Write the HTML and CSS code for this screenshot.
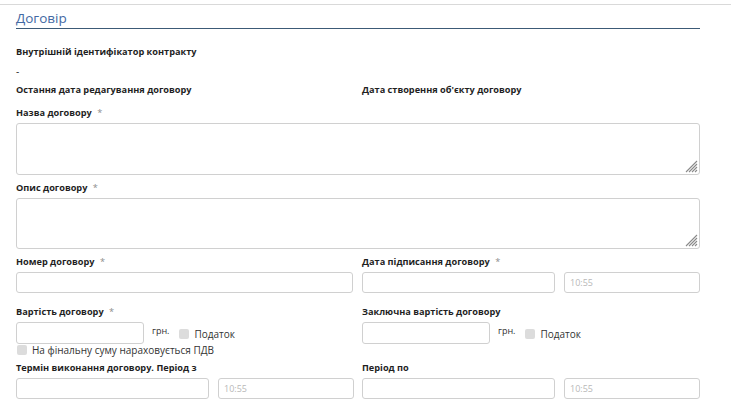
FILE: index.html
```html
<!DOCTYPE html>
<html lang="uk">
<head>
<meta charset="utf-8">
<title>Договір</title>
<link rel="stylesheet" href="styles.css">
</head>
<body>
<div class="topline"></div>
<main class="page">
  <h2 class="title">Договір</h2>

  <div class="info">
    <div class="label">Внутрішній ідентифікатор контракту</div>
    <div class="value">-</div>
    <div class="cols">
      <div class="label">Остання дата редагування договору</div>
      <div class="label">Дата створення об'єкту договору</div>
    </div>
  </div>

  <div class="block">
    <div class="label">Назва договору <span class="req">*</span></div>
    <div class="ta-wrap">
      <textarea class="ta"></textarea>
      <svg class="grip" width="14" height="14" viewBox="0 0 14 14"><path d="M13 2L2 13M13 5L5 13M13 8L8 13M13 11L11 13" stroke="#8a8a8a" stroke-width="1.1" fill="none"/></svg>
    </div>
  </div>

  <div class="block">
    <div class="label">Опис договору <span class="req">*</span></div>
    <div class="ta-wrap ta-wrap2">
      <textarea class="ta ta2"></textarea>
      <svg class="grip" width="14" height="14" viewBox="0 0 14 14"><path d="M13 2L2 13M13 5L5 13M13 8L8 13M13 11L11 13" stroke="#8a8a8a" stroke-width="1.1" fill="none"/></svg>
    </div>
  </div>

  <div class="cols block2">
    <div>
      <div class="label">Номер договору <span class="req">*</span></div>
      <input class="inp full" type="text">
    </div>
    <div>
      <div class="label">Дата підписання договору <span class="req">*</span></div>
      <div class="dt">
        <input class="inp" type="text">
        <input class="inp time" type="text" placeholder="10:55">
      </div>
    </div>
  </div>

  <div class="cols block3">
    <div>
      <div class="label">Вартість договору <span class="req">*</span></div>
      <div class="money">
        <input class="inp sum" type="text">
        <span class="cur">грн.</span>
        <span class="chk"></span>
        <span class="chk-label">Податок</span>
      </div>
    </div>
    <div>
      <div class="label">Заключна вартість договору</div>
      <div class="money">
        <input class="inp sum" type="text">
        <span class="cur">грн.</span>
        <span class="chk"></span>
        <span class="chk-label">Податок</span>
      </div>
    </div>
  </div>
  <div class="vat">
    <span class="chk"></span>
    <span class="chk-label">На фінальну суму нараховується ПДВ</span>
  </div>

  <div class="cols block4">
    <div>
      <div class="label">Термін виконання договору. Період з</div>
      <div class="dt">
        <input class="inp" type="text">
        <input class="inp time" type="text" placeholder="10:55">
      </div>
    </div>
    <div>
      <div class="label">Період по</div>
      <div class="dt">
        <input class="inp" type="text">
        <input class="inp time" type="text" placeholder="10:55">
      </div>
    </div>
  </div>
</main>
</body>
</html>
```
FILE: styles.css
```css
* { box-sizing: border-box; }
html, body { margin: 0; padding: 0; background: #fff; }
body {
  font-family: "Open Sans", "Noto Sans", "DejaVu Sans", sans-serif;
  color: #222;
  width: 731px;
  height: 419px;
  overflow: hidden;
}
.topline {
  height: 5px;
  border-bottom: 1px solid #d9d9d9;
}
.page {
  padding: 0 31px 0 16px;
}
.title {
  margin: 0;
  font-size: 13.5px;
  font-weight: 400;
  color: #4369a3;
  line-height: 22px;
  padding-top: 2px;
  height: 24px;
  border-bottom: 1px solid #3c5a76;
}
.label {
  font-size: 9.2px;
  font-weight: 700;
  line-height: 16px;
  color: #1f1f1f;
}
.req { color: #8c8c8c; font-weight: 400; margin-left: 3px; }
.info { padding-top: 15px; display: flex; flex-direction: column; gap: 3px; }
.value { font-size: 10px; line-height: 16px; }
.cols {
  display: grid;
  grid-template-columns: 337px 338px;
  column-gap: 9px;
}
.block { margin-top: 7px; }
.block + .block { margin-top: 5px; }
.block .label { margin-bottom: 2px; }
.ta-wrap { position: relative; height: 52px; }
.ta-wrap2 { height: 51px; }
.ta {
  display: block;
  width: 100%;
  height: 52px;
  border: 1px solid #d0d0d0;
  border-radius: 3px;
  resize: none;
  outline: none;
  background: #fff;
}
.ta2 { height: 51px; }
.grip { position: absolute; right: 2px; bottom: 2px; }
.block2 { margin-top: 5px; }
.block2 .label, .block3 .label, .block4 .label { margin-bottom: 2px; }
.inp {
  display: block;
  height: 21px;
  border: 1px solid #d0d0d0;
  border-radius: 3px;
  outline: none;
  background: #fff;
  font-family: inherit;
  font-size: 9px;
  padding: 0 5px;
  color: #333;
  margin: 0;
}
.inp::placeholder { color: #b8b8b8; }
.full { width: 100%; }
.dt { display: grid; grid-template-columns: 193px 136px; column-gap: 9px; }
.dt .inp { width: 100%; }
.block3 { margin-top: 11px; }
.money { display: flex; align-items: flex-start; }
.sum { width: 128px; height: 22px; }
.cur { font-size: 9px; line-height: 12px; margin-left: 8px; margin-top: 3px; color: #333; }
.money .chk { margin-left: 10px; margin-top: 7px; }
.money .chk-label { margin-left: 5px; margin-top: 5px; }
.chk {
  display: inline-block;
  width: 10px;
  height: 10px;
  background: #dcdcdc;
  border-radius: 2px;
  flex: none;
}
.chk-label { font-size: 10px; line-height: 14px; color: #333; }
.vat { display: flex; align-items: center; gap: 5px; padding-left: 1px; margin-top: -1px; height: 14px; }
.block4 { margin-top: 3px; }
```
